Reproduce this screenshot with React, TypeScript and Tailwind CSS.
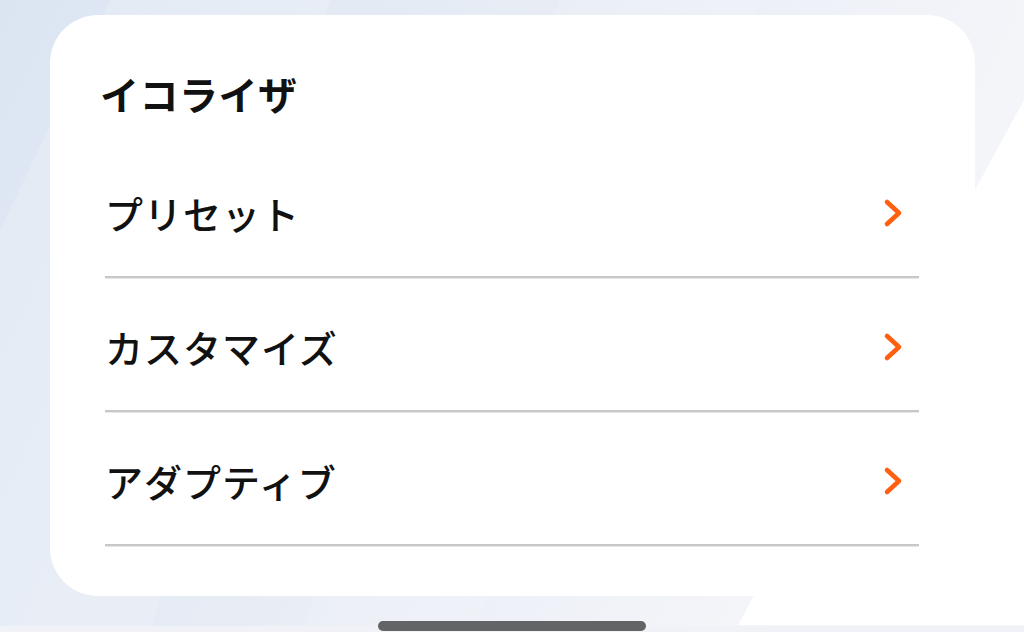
const items = ['プリセット', 'カスタマイズ', 'アダプティブ'];

function Chevron() {
    return (
        <svg width="20" height="30" viewBox="0 0 20 30" className="shrink-0">
            <path
                d="M4 4 L16 15 L4 26"
                fill="none"
                stroke="#ff5f0f"
                strokeWidth="4.6"
                strokeLinecap="round"
                strokeLinejoin="round"
            />
        </svg>
    );
}

function Background() {
    return (
        <svg className="absolute inset-0" width="1024" height="632" viewBox="0 0 1024 632">
            <defs>
                <linearGradient id="bg" x1="0" y1="0" x2="1" y2="0.3">
                    <stop offset="0" stopColor="#dbe5f2" />
                    <stop offset="0.5" stopColor="#e8edf5" />
                    <stop offset="1" stopColor="#f5f6fa" />
                </linearGradient>
            </defs>
            <rect width="1024" height="632" fill="url(#bg)" />
            {/* lighter diagonal bands */}
            <polygon points="110,0 330,0 150,632 0,632 0,230" fill="#ffffff" opacity="0.18" />
            <polygon points="560,0 760,0 470,632 300,632" fill="#ffffff" opacity="0.12" />
            {/* white wedge on the right */}
            <polygon points="1024,100 738,625 1024,625" fill="#ffffff" />
            <rect y="626" width="1024" height="6" fill="#f0f2f7" />
        </svg>
    );
}

export default function App() {
    return (
        <div
            className="relative w-[1024px] h-[632px] overflow-hidden"
            style={{ fontFamily: '"Noto Sans CJK JP", "Noto Sans", sans-serif' }}
        >
            <Background />
            <div className="relative flex flex-col pt-[15px] pl-[50px]">
                <div className="w-[925px] h-[581px] rounded-[48px] bg-white pl-[50px] pr-[56px] pt-[52px]">
                    <h1 className="text-[39px] leading-[52px] font-bold text-[#111] tracking-[0.5px]">
                        イコライザ
                    </h1>
                    <div className="mt-[25px] pl-[5px]">
                        {items.map((label) => (
                            <div
                                key={label}
                                className="h-[134px] flex items-center justify-between pt-[6px] pr-[16px] border-b-2 border-[#c8c8c8] shadow-[0_1px_0_#e8e8e8]"
                            >
                                <span className="text-[38px] leading-[48px] font-medium text-[#111] tracking-[1px]">
                                    {label}
                                </span>
                                <Chevron />
                            </div>
                        ))}
                    </div>
                </div>
                <div className="mt-[25px] ml-[328px] w-[268px] h-[10px] rounded-full bg-[#636466]" />
            </div>
        </div>
    );
}
